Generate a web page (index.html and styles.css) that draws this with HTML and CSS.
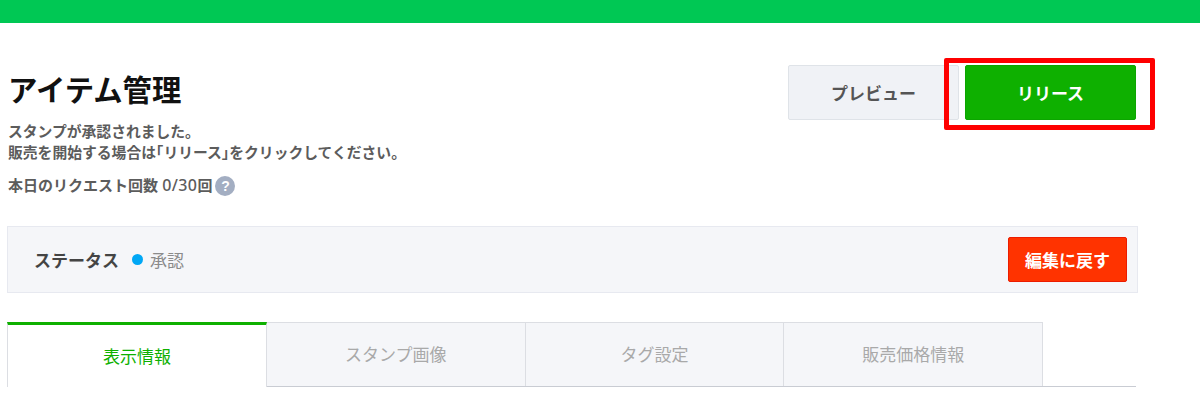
FILE: index.html
```html
<!DOCTYPE html>
<html lang="ja">
<head>
<meta charset="utf-8">
<title>アイテム管理</title>
<link rel="stylesheet" href="styles.css">
</head>
<body>
<div class="topbar"></div>
<main class="page">
  <header class="head">
    <div class="head-text">
      <h1 class="title">アイテム管理</h1>
      <p class="msg">スタンプが承認されました。<br>販売を開始する場合は<span class="bracket">「</span>リリース<span class="bracket">」</span>をクリックしてください。</p>
      <p class="count">本日のリクエスト回数 <span class="num">0/30</span>回<span class="help">?</span></p>
    </div>
    <div class="actions">
      <button class="btn btn-preview">プレビュー</button>
      <button class="btn btn-release">リリース</button>
      <span class="marker"></span>
    </div>
  </header>
  <section class="status">
    <div class="status-info">
      <strong class="status-label">ステータス</strong>
      <span class="dot"></span>
      <span class="status-value">承認</span>
    </div>
    <button class="btn-back">編集に戻す</button>
  </section>
  <nav class="tabs">
    <a class="tab tab-active">表示情報</a>
    <a class="tab">スタンプ画像</a>
    <a class="tab">タグ設定</a>
    <a class="tab">販売価格情報</a>
  </nav>
</main>
</body>
</html>
```
FILE: styles.css
```css
* { box-sizing: border-box; }
html, body { margin: 0; padding: 0; background: #fff; overflow: hidden; }
body {
  font-family: "Liberation Sans", "Noto Sans CJK JP", sans-serif;
  color: #555;
}
.topbar { height: 23px; background: #00c854; }
.page { width: 1136px; padding-left: 7px; }
.head { display: flex; justify-content: space-between; align-items: flex-start; height: 203px; }
.head-text { padding: 50px 0 0 1px; }
.title { margin: 0; font-size: 29.4px; line-height: 36px; font-weight: 700; color: #111; }
.msg { margin: 13px 0 0; font-size: 14.8px; line-height: 21px; font-weight: 700; color: #5c5c5c; white-space: nowrap; }
.bracket { font-feature-settings: "halt"; }
.count { margin: 11px 0 0; display: flex; align-items: center; white-space: pre; font-size: 15px; line-height: 21px; font-weight: 700; color: #5c5c5c; }
.num { font-family: "Noto Sans", sans-serif; font-size: 16px; letter-spacing: 0.4px; font-weight: 500; }
.help {
  width: 20px; height: 20px; border-radius: 50%; background: #a3aec2; color: #fff;
  font-size: 14px; line-height: 20px; text-align: center; font-weight: 700; margin-left: 3px;
}
.actions { position: relative; display: flex; gap: 6px; margin-top: 42px; }
.btn {
  width: 171px; height: 55px; border-radius: 2px; font: inherit; font-size: 17px; font-weight: 700; padding: 0;
}
.btn-preview { background: #f0f2f6; border: 1px solid #dfe3e8; color: #555; }
.btn-release { background: #0eb000; border: 1px solid #0ca500; color: #fff; }
.marker {
  position: absolute; left: 156px; top: -7px; width: 211px; height: 72px;
  border: 5px solid #fe0000; border-radius: 2px; pointer-events: none;
}
.status {
  display: flex; justify-content: space-between; align-items: center;
  width: 1131px; height: 67px; background: #f5f6f9; border: 1px solid #e7e9f0;
  padding: 0 10px 0 26px;
}
.status-info { display: flex; align-items: center; }
.status-label { font-size: 17px; font-weight: 700; color: #444; }
.dot { width: 11px; height: 11px; border-radius: 50%; background: #00a7f5; margin-left: 13px; }
.status-value { font-size: 17px; color: #8b8b8b; margin-left: 7px; }
.btn-back {
  width: 119px; height: 45px; background: #ff3300; border: 1px solid #ec1c00; border-radius: 2px;
  color: #fff; font: inherit; font-size: 17px; font-weight: 700; padding: 0;
}
.tabs {
  display: flex; margin-top: 29px; width: 1129px; height: 65px;
  border-bottom: 1px solid #c9ccd3;
}
.tab {
  width: 258.7px; height: 64px; background: #f5f6f9; border: 1px solid #dcdee3; border-left: 0; border-bottom: 0;
  display: flex; align-items: center; justify-content: center; font-size: 17px; color: #a9a9a9; padding-bottom: 2px;
}
.tab-active {
  width: 260px; height: 65px; background: #fff; color: #0eb000; border-top: 3px solid #0eb000;
  border-left: 1px solid #dcdee3; border-right: 1px solid #dcdee3; padding-bottom: 2px;
}
```
